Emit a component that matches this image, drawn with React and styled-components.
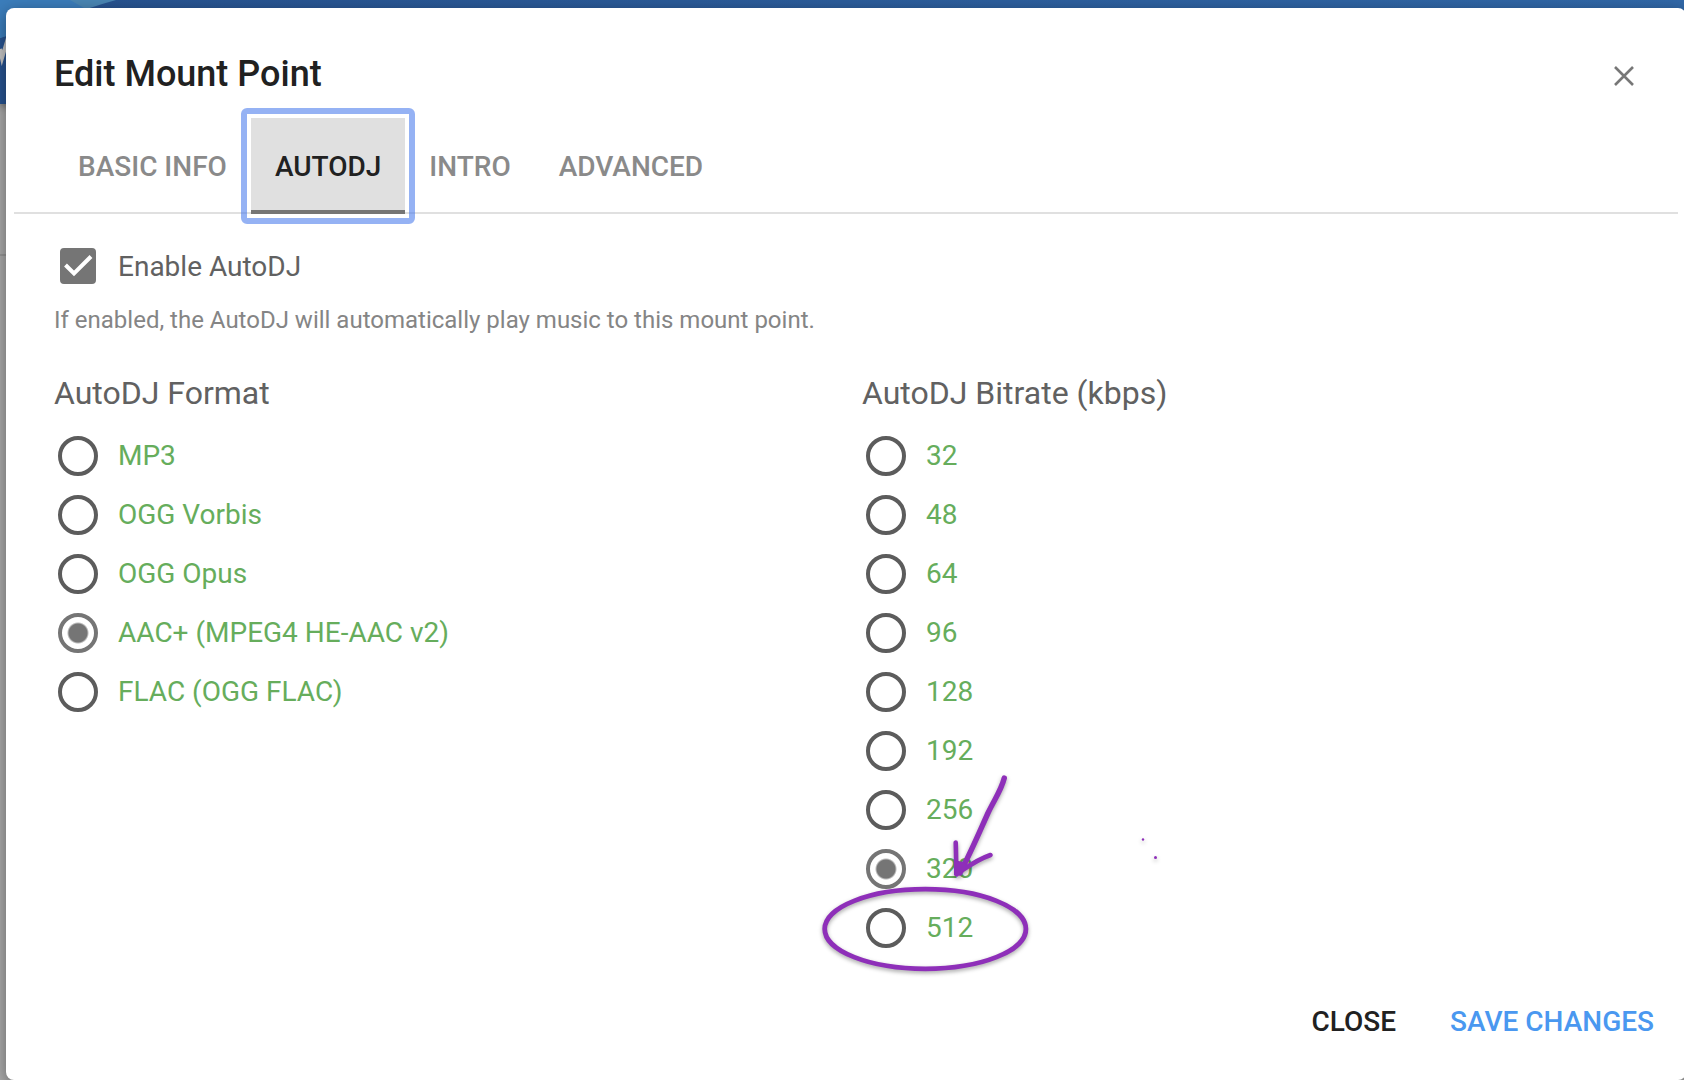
import React, { useState } from 'react'
import styled, { createGlobalStyle } from 'styled-components'

const tabs = ['Basic Info', 'AutoDJ', 'Intro', 'Advanced']

const formats = [
  { value: 'mp3', label: 'MP3' },
  { value: 'ogg', label: 'OGG Vorbis' },
  { value: 'opus', label: 'OGG Opus' },
  { value: 'aac', label: 'AAC+ (MPEG4 HE-AAC v2)' },
  { value: 'flac', label: 'FLAC (OGG FLAC)' },
]

const bitrates = ['32', '48', '64', '96', '128', '192', '256', '320', '512'].map(
  (b) => ({ value: b, label: b })
)

const RadioGroup = ({ name, legend, options, value, onChange }) => (
  <Fieldset>
    <legend>{legend}</legend>
    {options.map((o) => (
      <RadioRow key={o.value} htmlFor={`${name}-${o.value}`}>
        <input
          type='radio'
          id={`${name}-${o.value}`}
          name={name}
          value={o.value}
          checked={value === o.value}
          onChange={() => onChange(o.value)}
        />
        <span>{o.label}</span>
      </RadioRow>
    ))}
  </Fieldset>
)

const Annotation = () => (
  <Drawing width='360' height='220' viewBox='810 765 360 220' aria-hidden='true'>
    <ellipse cx='925.3' cy='929' rx='100.6' ry='39.8' fill='none' stroke='#8e2fb9' strokeWidth='4.8' />
    <g fill='none' stroke='#8e2fb9' strokeLinecap='round' strokeLinejoin='round'>
      <path d='M1004.300 778C1001 791 994 800 988 813C979 833 971 852 960 873' strokeWidth='5.4' />
      <path d='M955.700 842.500C956.200 854 956 864 956.500 874C966 868 976 860 990.500 855' strokeWidth='4.600' />
    </g>
    <path d='M954 860L963 862L968 866L957 877L954 875Z' fill='#8e2fb9' />
    <circle cx='1143' cy='839.5' r='1.2' fill='#8e2fb9' />
    <circle cx='1155.500' cy='857.500' r='1.5' fill='#8e2fb9' />
  </Drawing>
)

const App = () => {
  const [tab, setTab] = useState('AutoDJ')
  const [enabled, setEnabled] = useState(true)
  const [format, setFormat] = useState('aac')
  const [bitrate, setBitrate] = useState('320')

  return (
    <Page>
      <GlobalStyle />
      {/* page behind the modal */}
      <Backdrop>
        <TopBar>
          <svg width='130' height='104' viewBox='0 0 130 104' aria-hidden='true'>
            <path d='M0 0H116C80 10 40 26 0 38Z' fill='#4a86b4' />
            <path d='M0 0H70L84 8L0 38Z' fill='#3b7dbb' />
            <path d='M0 49L2 58L8 38' fill='none' stroke='#c4c4c4' strokeWidth='4' />
          </svg>
        </TopBar>
        <SubBar />
      </Backdrop>
      {/* modal */}
      <Modal role='dialog' aria-labelledby='modal-title'>
        <Header>
          <h1 id='modal-title'>Edit Mount Point</h1>
          <CloseIcon type='button' aria-label='Close'>
            <svg width='20' height='20' viewBox='0 0 20 20'>
              <path d='M1 1L19 19M19 1L1 19' stroke='#777' strokeWidth='2.6' />
            </svg>
          </CloseIcon>
        </Header>
        <TabList role='tablist'>
          {tabs.map((t) => (
            <Tab
              key={t}
              type='button'
              role='tab'
              aria-selected={tab === t}
              $active={tab === t}
              onClick={() => setTab(t)}
            >
              {t}
            </Tab>
          ))}
        </TabList>
        <Body>
          <CheckRow htmlFor='enable-autodj'>
            <CheckBox>
              <input
                type='checkbox'
                id='enable-autodj'
                checked={enabled}
                onChange={(e) => setEnabled(e.target.checked)}
              />
              {enabled && (
                <svg width='36' height='36' viewBox='0 0 36 36' aria-hidden='true'>
                  <path d='M5.500 17L14 25.500L31 8.500' fill='none' stroke='#fff' strokeWidth='4' />
                </svg>
              )}
            </CheckBox>
            <span>Enable AutoDJ</span>
          </CheckRow>
          <Help>If enabled, the AutoDJ will automatically play music to this mount point.</Help>
          <Columns>
            <RadioGroup
              name='format'
              legend='AutoDJ Format'
              options={formats}
              value={format}
              onChange={setFormat}
            />
            <RadioGroup
              name='bitrate'
              legend='AutoDJ Bitrate (kbps)'
              options={bitrates}
              value={bitrate}
              onChange={setBitrate}
            />
          </Columns>
        </Body>
        <Footer>
          <FlatButton type='button'>Close</FlatButton>
          <FlatButton type='button' $primary>
            Save Changes
          </FlatButton>
        </Footer>
      </Modal>
      <Annotation />
    </Page>
  )
}

const GlobalStyle = createGlobalStyle`
  *, *::before, *::after {
    box-sizing: border-box;
  }
  body {
    margin: 0;
    overflow: hidden;
    font-family: Roboto, 'Liberation Sans', sans-serif;
    background: #a9a9a9;
  }
  button {
    font-family: inherit;
    border: none;
    background: transparent;
    cursor: pointer;
  }
`

const Page = styled.div`
  position: relative;
  min-height: 100vh;
  padding: 8px 0 0 6px;
`

const Backdrop = styled.div`
  position: absolute;
  inset: 0;
`

const TopBar = styled.div`
  height: 104px;
  background: linear-gradient(90deg, #27528f, #3168a8);
  box-shadow: 0 2px 8px rgba(0, 0, 0, 0.4);
`

const SubBar = styled.div`
  height: 152px;
  border-bottom: 2px solid #959595;
`

const Modal = styled.section`
  position: relative;
  margin-right: -2px;
  padding: 0 8px;
  border-radius: 8px;
  background: #fff;
  box-shadow: 0 4px 16px rgba(0, 0, 0, 0.4);
`

const Header = styled.header`
  display: flex;
  align-items: flex-end;
  justify-content: space-between;
  padding: 44px 40px 22px;
  h1 {
    margin: 0;
    font-size: 36px;
    font-weight: 500;
    line-height: 44px;
    color: #212121;
  }
`

const CloseIcon = styled.button`
  display: flex;
  padding: 10px 4px;
`

const TabList = styled.div`
  display: flex;
  padding: 0 40px;
  border-bottom: 2px solid #e0e0e0;
`

const Tab = styled.button`
  height: 96px;
  margin-bottom: -2px;
  padding: 6px 24px 0;
  border-bottom: 4px solid ${({ $active }) => ($active ? '#757575' : 'transparent')};
  background: ${({ $active }) => ($active ? '#e0e0e0' : 'transparent')};
  color: ${({ $active }) => ($active ? '#212121' : '#8a8a8a')};
  font-size: 28px;
  font-weight: 500;
  line-height: 32px;
  text-transform: uppercase;
  ${({ $active }) =>
    $active &&
    `
    position: relative;
    &::after {
      content: '';
      position: absolute;
      inset: -10px -10px -14px;
      border: 6px solid rgba(73, 122, 236, 0.58);
      border-radius: 6px;
    }
  `}
`

const Body = styled.div`
  padding: 32px 40px 0;
`

const CheckRow = styled.label`
  display: flex;
  align-items: center;
  gap: 22px;
  height: 40px;
  padding-left: 6px;
  font-size: 28px;
  line-height: 42px;
  color: #616161;
  cursor: pointer;
  span:last-child {
    padding-top: 2px;
  }
`

const CheckBox = styled.span`
  display: grid;
  > * {
    grid-area: 1 / 1;
  }
  input {
    appearance: none;
    width: 36px;
    height: 36px;
    margin: 0;
    border: 4px solid #616161;
    border-radius: 4px;
    &:checked {
      border-color: #757575;
      background: #757575;
    }
  }
  svg {
    pointer-events: none;
  }
`

const Help = styled.p`
  margin: 16px 0 0;
  font-size: 24px;
  line-height: 36px;
  color: #858585;
`

const Columns = styled.div`
  display: grid;
  grid-template-columns: 1fr 1fr;
  gap: 32px;
  margin-top: 35px;
`

const Fieldset = styled.fieldset`
  min-width: 0;
  margin: 0;
  padding: 0;
  border: none;
  legend {
    margin-bottom: 13px;
    padding: 0;
    font-size: 32px;
    line-height: 40px;
    color: #616161;
  }
`

const RadioRow = styled.label`
  display: flex;
  align-items: center;
  gap: 20px;
  height: 59px;
  padding-left: 4px;
  font-size: 28px;
  line-height: 40px;
  color: #66ad5c;
  cursor: pointer;
  input {
    appearance: none;
    flex-shrink: 0;
    width: 40px;
    height: 40px;
    margin: 0;
    border: 4px solid #5c5c5c;
    border-radius: 50%;
    &:checked {
      border-color: #757575;
      background: radial-gradient(circle, #757575 9px, transparent 11px);
    }
  }
`

const Footer = styled.footer`
  display: flex;
  justify-content: flex-end;
  gap: 22px;
  padding: 29px 8px 22px;
`

const FlatButton = styled.button`
  height: 72px;
  padding: 0 16px;
  color: ${({ $primary }) => ($primary ? '#4a98f0' : '#212121')};
  font-size: 28px;
  font-weight: 500;
  line-height: 32px;
  text-transform: uppercase;
`

const Drawing = styled.svg`
  position: absolute;
  left: 810px;
  top: 765px;
  pointer-events: none;
  filter: drop-shadow(0 2px 2px rgba(0, 0, 0, 0.35));
`

export default App
